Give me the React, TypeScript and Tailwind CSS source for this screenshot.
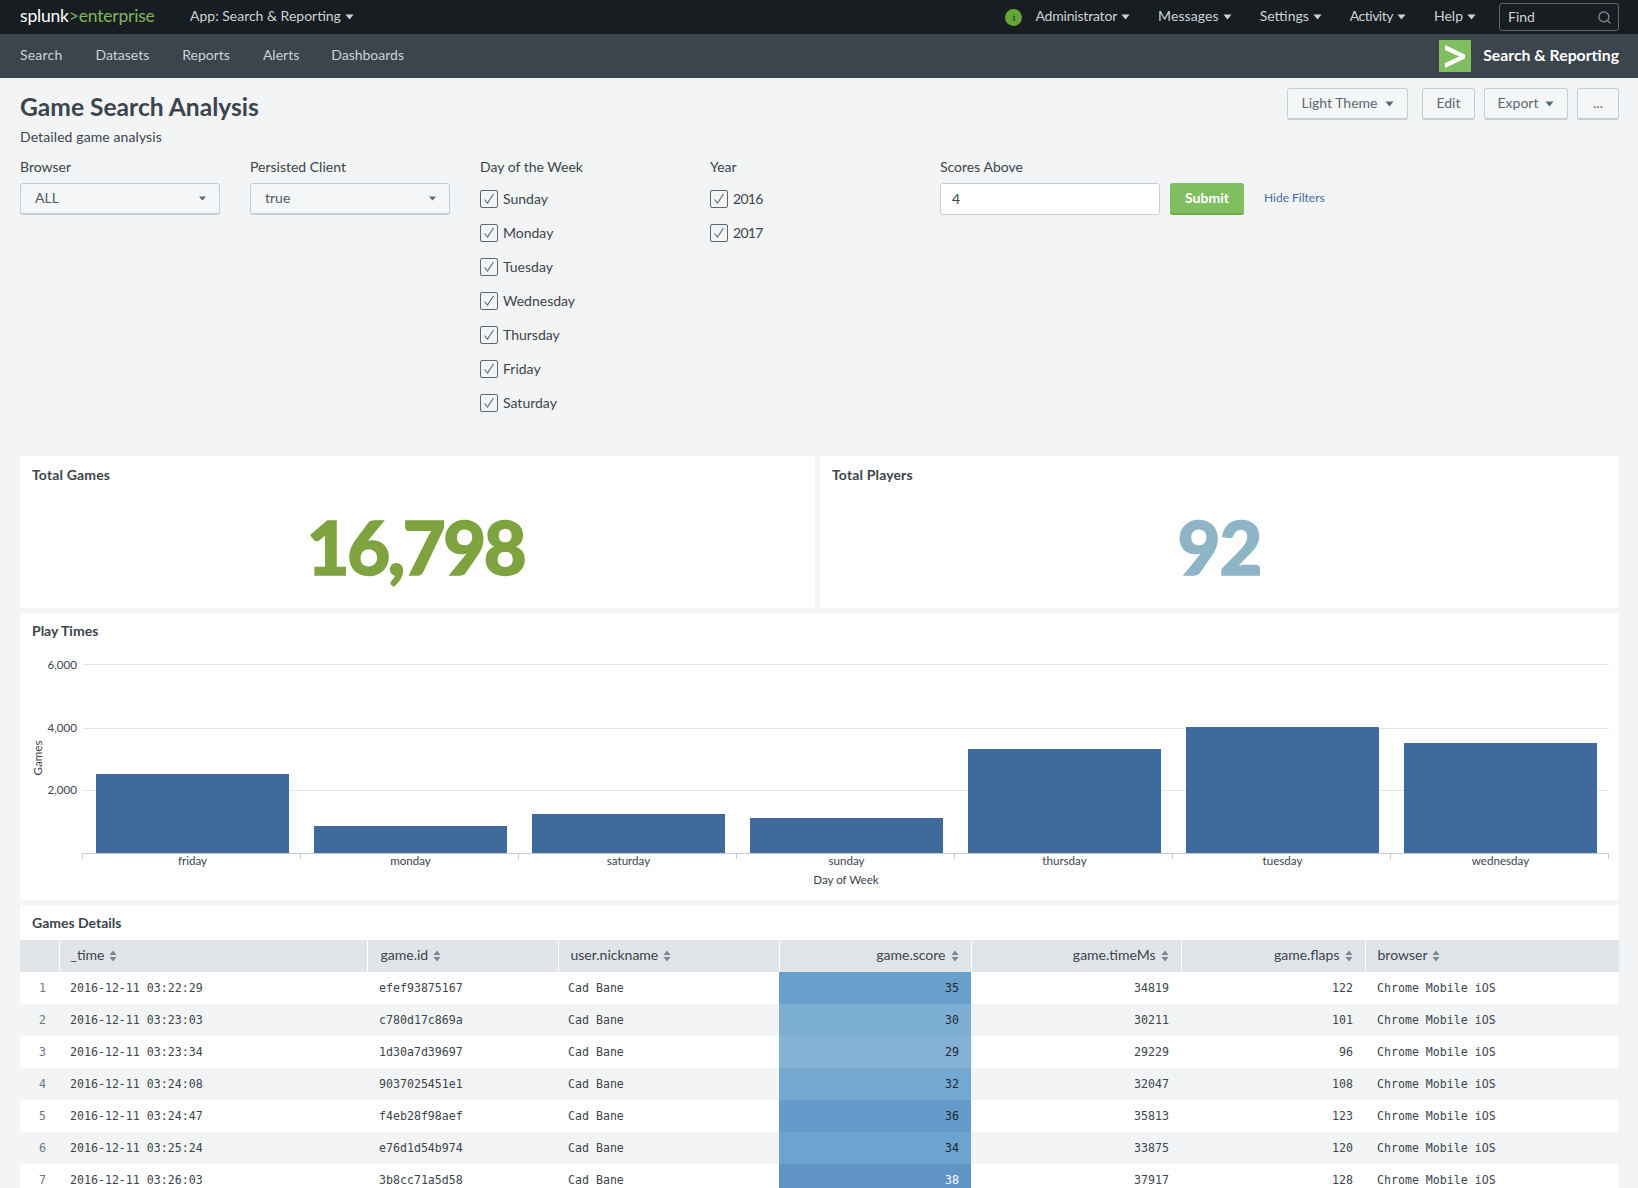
import { Search } from "lucide-react";

const mono = "[font-family:'DejaVu_Sans_Mono',monospace] text-[11.6px]";

const rows = [
  ["2016-12-11 03:22:29", "efef93875167", "35", "34819", "122", "bg-[#689fcb]", "text-[#1f262c]"],
  ["2016-12-11 03:23:03", "c780d17c869a", "30", "30211", "101", "bg-[#7dafd5]", "text-[#1f262c]"],
  ["2016-12-11 03:23:34", "1d30a7d39697", "29", "29229", "96", "bg-[#83b2d6]", "text-[#1f262c]"],
  ["2016-12-11 03:24:08", "9037025451e1", "32", "32047", "108", "bg-[#74a8d1]", "text-[#1f262c]"],
  ["2016-12-11 03:24:47", "f4eb28f98aef", "36", "35813", "123", "bg-[#659bcb]", "text-[#1f262c]"],
  ["2016-12-11 03:25:24", "e76d1d54b974", "34", "33875", "120", "bg-[#6ca3d0]", "text-[#1f262c]"],
  ["2016-12-11 03:26:03", "3b8cc71a5d58", "38", "37917", "128", "bg-[#5f94c5]", "text-white"],
];

const bars = [
  { name: "friday", h: 79 },
  { name: "monday", h: 27 },
  { name: "saturday", h: 39 },
  { name: "sunday", h: 35 },
  { name: "thursday", h: 104 },
  { name: "tuesday", h: 126 },
  { name: "wednesday", h: 110 },
];

function Caret({ className }: { className?: string }) {
  return (
    <svg width="9" height="6" viewBox="0 0 9 6" fill="currentColor" className={className}>
      <path d="M0.5 0.5h8L4.5 5.5z" />
    </svg>
  );
}

function SortIcon() {
  return (
    <svg width="8" height="12" viewBox="0 0 8 12" fill="#7c8794" className="ml-[5px] shrink-0">
      <path d="M4 0.5L7.5 5H0.5z" />
      <path d="M4 11.5L7.5 7H0.5z" />
    </svg>
  );
}

function TopMenu({ label, className }: { label: string; className?: string }) {
  return (
    <span className={`flex items-center gap-[4px] ${className ?? ""}`}>
      <span className="pb-[3px]">{label}</span>
      <Caret />
    </span>
  );
}

function Select({ value }: { value: string }) {
  return (
    <div className="w-[200px] h-8 flex items-center justify-between pl-[14px] pr-[13px] bg-[#f5f6f8] border border-[#c8ced6] border-b-2 rounded-[3px] text-[#4f5862]">
      <span className="pb-[2px]">{value}</span>
      <svg width="7" height="5" viewBox="0 0 7 5" fill="currentColor" className="text-[#5c6773]">
        <path d="M0 0.5h7L3.5 4.5z" />
      </svg>
    </div>
  );
}

function Check({ label, className }: { label: string; className?: string }) {
  return (
    <div className="h-[34px] flex items-start gap-[5px]">
      <span className="w-[18px] h-[18px] flex items-center justify-center border border-[#5c6773] rounded-[2px]">
        <svg width="14" height="14" viewBox="0 0 14 14" fill="none" stroke="#5c6773" strokeWidth="1.1">
          <path d="M2.5 7.5L5.5 11L11.5 2" />
        </svg>
      </span>
      <span className={`leading-[18px] ${className ?? ""}`}>{label}</span>
    </div>
  );
}

function Button({ label, caret, className }: { label: string; caret?: boolean; className: string }) {
  return (
    <div className={`h-8 flex items-center justify-center gap-[7px] bg-[#f5f6f8] border border-[#c8ced6] border-b-2 rounded-[3px] text-[#5c6773] ${className}`}>
      <span className="pb-[2px]">{label}</span>
      {caret && <Caret />}
    </div>
  );
}

function Th({ label, right, className }: { label: string; right?: boolean; className?: string }) {
  return (
    <th className={`p-0 px-3 font-normal border-l border-white ${className ?? ""}`}>
      <div className={`flex items-center ${right ? "justify-end" : "justify-start"}`}>
        <span className="pb-[3px]">{label}</span>
        <SortIcon />
      </div>
    </th>
  );
}

export default function App() {
  return (
    <div className="h-[1188px] overflow-hidden bg-[#f2f4f5] [font-family:Lato,sans-serif] text-[14px] text-[#3c444d]">
      <header className="h-[34px] flex items-center pl-5 pr-[19px] bg-[#171d21] text-[#cdd2d7]">
        <div className="w-[170px] flex items-baseline pb-[3px] text-[17.5px] leading-none tracking-[-0.2px]">
          <span className="text-white">splunk</span>
          <span className="text-[#7fb65c]">&gt;enterprise</span>
        </div>
        <TopMenu label="App: Search & Reporting" />
        <div className="ml-auto flex items-center gap-[28px]">
          <div className="flex items-center gap-[13px]">
            <span className="w-[17px] h-[17px] rounded-full bg-[#65a637] flex items-center justify-center text-[11px] text-[#171d21] [font-family:'Liberation_Serif',serif]">i</span>
            <TopMenu label="Administrator" className="tracking-[-0.2px]" />
          </div>
          <TopMenu label="Messages" className="tracking-[0.1px]" />
          <TopMenu label="Settings" />
          <TopMenu label="Activity" className="tracking-[-0.5px]" />
          <TopMenu label="Help" />
        </div>
        <div className="ml-[23px] w-[120px] h-7 flex items-center justify-between pl-2 pr-[6px] border border-[#5c6773] rounded-[3px]">
          <span className="pb-[2px]">Find</span>
          <Search size={15} className="text-[#8a939c]" />
        </div>
      </header>

      <nav className="h-[44px] flex items-center pl-5 pr-[19px] bg-[#3c444d] text-[#cdd2d7]">
        <div className="flex gap-[33px] pb-1">
          <span className="tracking-[0.2px]">Search</span>
          <span>Datasets</span>
          <span>Reports</span>
          <span>Alerts</span>
          <span className="-ml-px">Dashboards</span>
        </div>
        <div className="ml-auto flex items-center gap-3">
          <svg width="32" height="32" viewBox="0 0 32 32" className="shrink-0">
            <rect width="32" height="32" fill="#7fbf5f" />
            <path d="M6 5L26 14.5V18.5L6 28V23L20.5 16.5L6 10z" fill="#fff" />
          </svg>
          <span className="pb-[2px] text-[15.8px] font-bold text-white">Search &amp; Reporting</span>
        </div>
      </nav>

      <main className="px-5 pb-0 pr-[19px]">
        <div className="flex items-start justify-between pt-[10px]">
          <div className="mt-1">
            <h1 className="text-[24.6px] leading-[30px] font-bold">Game Search Analysis</h1>
            <p className="mt-[5px] leading-5 tracking-[0.1px]">Detailed game analysis</p>
          </div>
          <div className="flex">
            <Button label="Light Theme" caret className="w-[121px]" />
            <Button label="Edit" className="w-[53px] ml-[14px]" />
            <Button label="Export" caret className="w-[84px] ml-[9px]" />
            <Button label="..." className="w-[42px] ml-[9px]" />
          </div>
        </div>

        <section className="mt-[10px] flex h-[299px] items-start">
          <div className="w-[230px]">
            <div className="leading-5 mb-[6px]">Browser</div>
            <Select value="ALL" />
          </div>
          <div className="w-[230px]">
            <div className="leading-5 mb-[6px]">Persisted Client</div>
            <Select value="true" />
          </div>
          <div className="w-[230px]">
            <div className="leading-5 mb-[13px]">Day of the Week</div>
            {["Sunday", "Monday", "Tuesday", "Wednesday", "Thursday", "Friday", "Saturday"].map((d) => (
              <Check key={d} label={d} />
            ))}
          </div>
          <div className="w-[230px]">
            <div className="leading-5 mb-[13px]">Year</div>
            <Check label="2016" className="tracking-[-0.7px]" />
            <Check label="2017" className="tracking-[-0.7px]" />
          </div>
          <div>
            <div className="leading-5 mb-[6px]">Scores Above</div>
            <div className="flex items-center">
              <div className="w-[220px] h-8 flex items-center pb-[2px] px-[11px] bg-white border border-[#c8ced6] rounded-[3px]">4</div>
              <div className="ml-[10px] w-[74px] h-8 flex items-center justify-center pb-[1px] bg-[#7fbf5f] border-b-2 border-[#6cab4e] rounded-[3px] text-white font-bold">Submit</div>
              <span className="ml-5 pb-[2px] text-[12px] text-[#3f6b9f]">Hide Filters</span>
            </div>
          </div>
        </section>

        <section className="flex gap-[5px]">
          <div className="w-[795px] h-[152px] bg-white pt-[9px] px-3">
            <h2 className="leading-5 font-bold tracking-[0.15px]">Total Games</h2>
            <div className="mt-[20px] -translate-x-[2px] text-center text-[74px] leading-[84px] font-black tracking-[-2.4px] [-webkit-text-stroke:1.5px_#7ea33f] text-[#7ea33f]">16,798</div>
          </div>
          <div className="flex-1 h-[152px] bg-white pt-[9px] px-3">
            <h2 className="leading-5 font-bold tracking-[0.15px]">Total Players</h2>
            <div className="mt-[20px] text-center text-[74px] leading-[84px] font-black tracking-[-1px] [-webkit-text-stroke:1.5px_#8db5c6] text-[#8db5c6]">92</div>
          </div>
        </section>

        <section className="mt-[5px] h-[287px] bg-white pt-2">
          <h2 className="leading-5 font-bold px-3">Play Times</h2>
          <svg width="1599" height="259" viewBox="20 641 1599 259" className="block text-[11.6px]" fontFamily="Lato, sans-serif">
            {[664, 728, 790].map((y) => (
              <line key={y} x1="83" x2="1609" y1={y + 0.5} y2={y + 0.5} stroke="#e1e6eb" />
            ))}
            {[["6,000", 665], ["4,000", 728], ["2,000", 790]].map(([t, y]) => (
              <text key={t} x="77" y={Number(y) + 4} textAnchor="end" fill="#3c444d">{t}</text>
            ))}
            <text transform="translate(42 758) rotate(-90)" textAnchor="middle" fill="#3c444d">Games</text>
            {bars.map((b, i) => (
              <g key={b.name}>
                <rect x={96 + i * 218} y={853 - b.h} width="193" height={b.h} fill="#3e6b9b" />
                <text x={192.5 + i * 218} y="865" textAnchor="middle" fill="#3c444d">{b.name}</text>
              </g>
            ))}
            <line x1="82" x2="1609" y1="853.5" y2="853.5" stroke="#c3cbd4" />
            {bars.map((b, i) => (
              <line key={b.name} x1={82.5 + i * 218} x2={82.5 + i * 218} y1="853" y2="859" stroke="#c3cbd4" />
            ))}
            <line x1="1608.5" x2="1608.5" y1="853" y2="859" stroke="#c3cbd4" />
            <text x="846" y="884" textAnchor="middle" fill="#3c444d">Day of Week</text>
          </svg>
        </section>

        <section className="mt-[5px] bg-white pt-2">
          <h2 className="leading-5 font-bold px-3 pb-[7px]">Games Details</h2>
          <table className="w-[1599px] table-fixed border-collapse">
            <colgroup>
              <col className="w-[39px]" />
              <col className="w-[308px]" />
              <col className="w-[191px]" />
              <col className="w-[221px]" />
              <col className="w-[192px]" />
              <col className="w-[210px]" />
              <col className="w-[184px]" />
              <col className="w-[254px]" />
            </colgroup>
            <thead>
              <tr className="h-8 bg-[#e1e4e8]">
                <th className="p-0" />
                <Th label="_time" className="pl-[11px]" />
                <Th label="game.id" className="pl-[13px]" />
                <Th label="user.nickname" className="pl-[12px]" />
                <Th label="game.score" right />
                <Th label="game.timeMs" right />
                <Th label="game.flaps" right />
                <Th label="browser" />
              </tr>
            </thead>
            <tbody className={mono}>
              {rows.map((r, i) => (
                <tr key={r[1]} className={`h-8 ${i % 2 ? "bg-[#f2f4f5]" : "bg-white"}`}>
                  <td className="p-0 pt-[2px] pr-[13px] text-right text-[#6b7785]">{i + 1}</td>
                  <td className="p-0 pt-[2px] px-[11px]">{r[0]}</td>
                  <td className="p-0 pt-[2px] px-3">{r[1]}</td>
                  <td className="p-0 pt-[2px] px-[10px]">Cad Bane</td>
                  <td className={`p-0 pt-[2px] px-3 text-right ${r[5]} ${r[6]}`}>{r[2]}</td>
                  <td className="p-0 pt-[2px] px-3 text-right">{r[3]}</td>
                  <td className="p-0 pt-[2px] px-3 text-right">{r[4]}</td>
                  <td className="p-0 pt-[2px] px-3">Chrome Mobile iOS</td>
                </tr>
              ))}
            </tbody>
          </table>
        </section>
      </main>
    </div>
  );
}
